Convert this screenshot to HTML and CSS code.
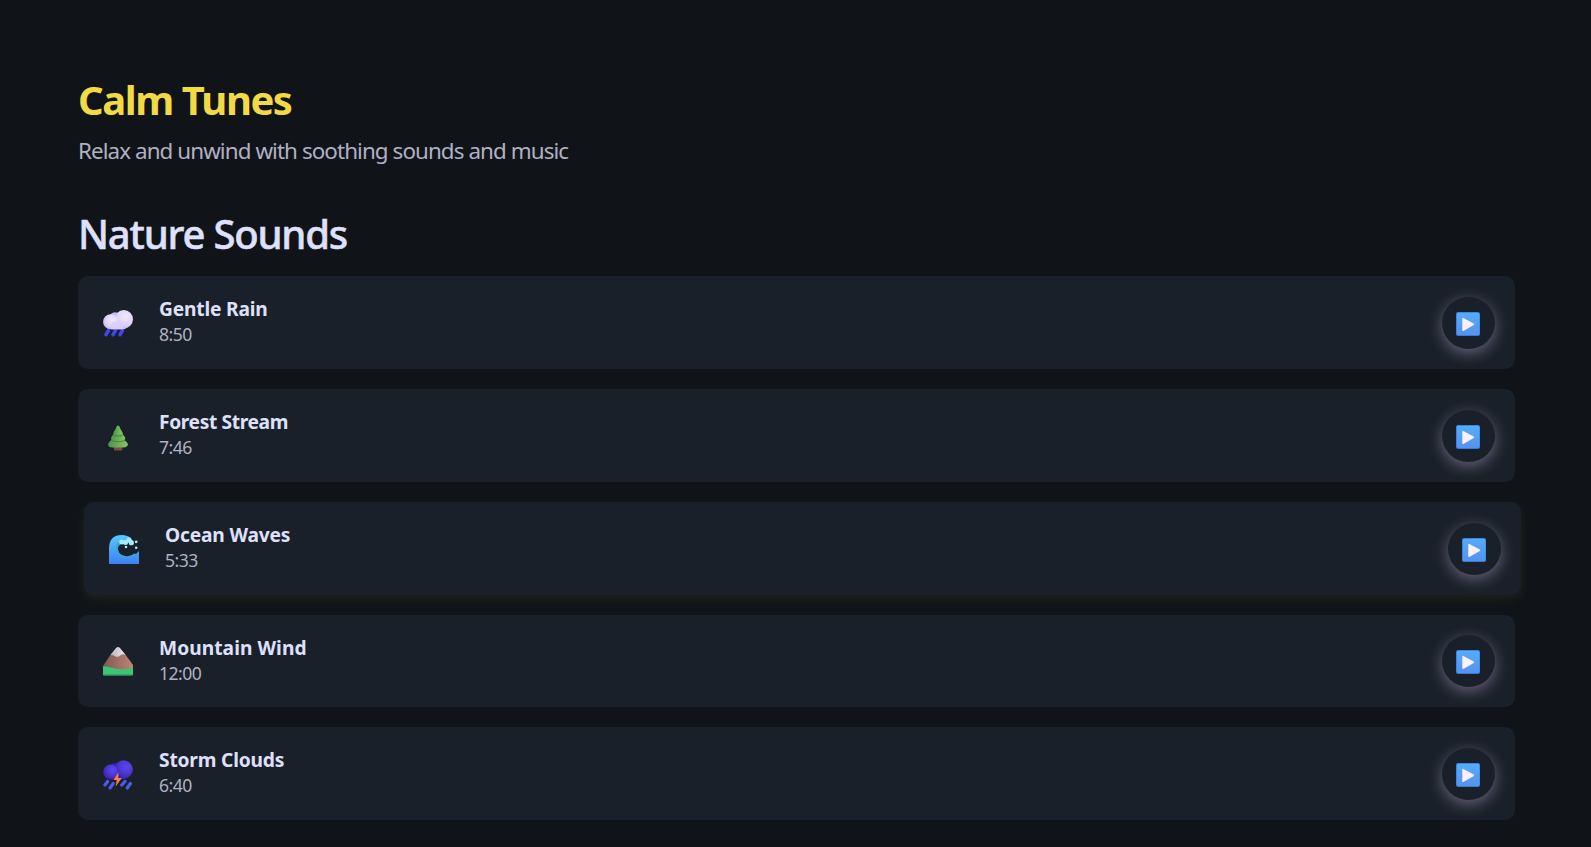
FILE: index.html
```html
<!DOCTYPE html>
<html lang="en">
<head>
<meta charset="utf-8">
<title>Calm Tunes</title>
<link rel="stylesheet" href="styles.css">
</head>
<body>
<svg class="defs" aria-hidden="true">
  <defs>
    <linearGradient id="play-bg" x1="0" y1="0" x2="0" y2="1"><stop offset="0" stop-color="#52adfb"/><stop offset="1" stop-color="#5493ee"/></linearGradient>
    <symbol id="play" viewBox="0 0 24 24">
      <rect width="24" height="24" rx="2" fill="#3c78d8"/>
      <rect x=".8" y=".8" width="22.7" height="22.2" rx="1.6" fill="url(#play-bg)"/>
      <path d="M6.300 6.600q0-1.200 1-.6l10.500 5.600q1 .7 0 1.400l-10.500 5.900q-1 .5-1-.6z" fill="#fdeffb"/>
    </symbol>
  </defs>
</svg>
<main class="page">
  <header>
    <h1 class="title">Calm Tunes</h1>
    <p class="subtitle">Relax and unwind with soothing sounds and music</p>
  </header>
  <section>
    <h2 class="section-title">Nature Sounds</h2>
    <ul class="tracks">
      <li class="track">
        <svg class="track-icon" viewBox="0 0 30 30">
          <defs><radialGradient id="rain-puff" cx=".6" cy=".35" r=".75"><stop offset="0" stop-color="#f3e9ff"/><stop offset=".6" stop-color="#ddd3fa"/><stop offset="1" stop-color="#b9b2e8"/></radialGradient></defs>
          <path d="M5.500 21.500l-2.500 4.200M12.500 21.500l-2.500 4.200M19.500 21.500l-2.500 4.200" stroke="#3f46f8" stroke-width="3.500" stroke-linecap="round"/>
          <circle cx="12" cy="9" r="5.800" fill="#c3bdf0"/>
          <rect x="5" y="11" width="19" height="9.300" rx="4" fill="#d3caf6"/>
          <circle cx="20.800" cy="10.200" r="9.200" fill="url(#rain-puff)"/>
          <circle cx="7.600" cy="12.800" r="7.500" fill="url(#rain-puff)"/>
          <path d="M9 13h11v7.300H8z" fill="#d9cff8"/>
        </svg>
        <div class="track-info"><h3 class="track-name">Gentle Rain</h3><p class="track-time">8:50</p></div>
        <button class="play" aria-label="Play"><svg class="play-icon"><use href="#play"/></svg></button>
      </li>
      <li class="track">
        <svg class="track-icon" viewBox="0 0 30 30">
          <defs><linearGradient id="leaf" x1="0" x2="1"><stop offset="0" stop-color="#4f944e"/><stop offset="1" stop-color="#84c95a"/></linearGradient></defs>
          <rect x="11" y="24" width="8.300" height="4.400" rx=".8" fill="#7b4b4b"/>
          <path d="M9.500 15.500h11q.5 2.500 3 4.500q2.300 2.300.8 4-1.300 1.500-4.500 1.500H9.800q-3.200 0-4.300-1.500-1.300-1.700.7-4 2.800-2 3.300-4.500z" fill="url(#leaf)"/>
          <path d="M9 19.500q6 1.600 12.500-.2l.5-.6-2-3H10l-2 3z" fill="#4a8742"/>
          <path d="M11 10h8q.3 2.500 2 4 2.200 2.200.8 3.500-1.500 1.500-6.800 1.500t-6.500-1.500q-1.300-1.300.7-3.500 1.800-2 1.800-4z" fill="url(#leaf)"/>
          <path d="M10.500 14q4 1.200 9 0l-1-2.500h-7z" fill="#4a8742"/>
          <path d="M13.500 4.500q1.500-2 3 0 .9 3 2.500 5 2.500 3.800-4 4-6.300-.2-4-4 1.700-2 2.500-5z" fill="url(#leaf)"/>
        </svg>
        <div class="track-info"><h3 class="track-name">Forest Stream</h3><p class="track-time">7:46</p></div>
        <button class="play" aria-label="Play"><svg class="play-icon"><use href="#play"/></svg></button>
      </li>
      <li class="track track-active">
        <svg class="track-icon" viewBox="0 0 30 30">
          <defs><linearGradient id="sea" x1="0" y1="0" x2="0" y2="1"><stop offset="0" stop-color="#55c8fd"/><stop offset="1" stop-color="#3f80f3"/></linearGradient></defs>
          <path d="M0 29V12Q1 0 12.500 0q6.500 0 10 3.500L24 8 15 8Q8.500 9 9 14.500T15 21.500q8 2.500 15-5.500v13z" fill="url(#sea)"/>
          <path d="M13 6.500Q7.500 8.500 8 14t5.500 7.200q7 2.800 13-2.200" fill="none" stroke="#35a5dd" stroke-width="2"/>
          <g fill="#a5ecfb"><circle cx="12.700" cy="7" r="2.500"/><circle cx="16.500" cy="7.500" r="2.500"/><circle cx="19.800" cy="4.700" r="2.300"/><circle cx="22.300" cy="7.700" r="2.600"/><circle cx="27.200" cy="6.800" r="1.400"/><circle cx="17" cy="12" r="1.300"/><circle cx="27.200" cy="12.800" r="1.300"/></g>
        </svg>
        <div class="track-info"><h3 class="track-name">Ocean Waves</h3><p class="track-time">5:33</p></div>
        <button class="play" aria-label="Play"><svg class="play-icon"><use href="#play"/></svg></button>
      </li>
      <li class="track">
        <svg class="track-icon" viewBox="0 0 30 30">
          <defs><linearGradient id="rock" x1="0" x2="1"><stop offset="0" stop-color="#80584f"/><stop offset="1" stop-color="#bd8678"/></linearGradient><linearGradient id="snow" x1="0" x2="1"><stop offset="0" stop-color="#b9b3bb"/><stop offset="1" stop-color="#eee9f1"/></linearGradient></defs>
          <path d="M0 19L8 7l14 0 8 11v6H0z" fill="url(#rock)"/>
          <path d="M7.500 7.700L13 1q2-2 4 0l5.500 6.700q-3-1.200-5 .5-2.500 2.300-5 1.200-2-1.500-5-1.700z" fill="url(#snow)"/>
          <path d="M0 19.500q5-.5 10 1.500t12 1q5-1 8-1.500v7q0 1-1 1H1q-1 0-1-1z" fill="#3dc576"/>
          <path d="M.5 28.100h29" stroke="#287f51" stroke-width=".9"/>
        </svg>
        <div class="track-info"><h3 class="track-name">Mountain Wind</h3><p class="track-time">12:00</p></div>
        <button class="play" aria-label="Play"><svg class="play-icon"><use href="#play"/></svg></button>
      </li>
      <li class="track">
        <svg class="track-icon" viewBox="0 0 30 30">
          <defs><radialGradient id="storm-puff" cx=".65" cy=".35" r=".75"><stop offset="0" stop-color="#5a46f2"/><stop offset=".5" stop-color="#4a38d5"/><stop offset="1" stop-color="#341ba0"/></radialGradient></defs>
          <path d="M4.600 21.500L2 25M10.200 23.500L7 28M22 21.500L18.800 25M27.400 23.500L24.300 28" stroke="#4c5af0" stroke-width="3.200" stroke-linecap="round"/>
          <circle cx="12" cy="9" r="5.900" fill="#3921a8"/>
          <rect x="5" y="11" width="19" height="8.200" rx="3" fill="#351ea2"/>
          <circle cx="20.500" cy="9.500" r="9.300" fill="url(#storm-puff)"/>
          <circle cx="7.500" cy="12" r="7.400" fill="url(#storm-puff)"/>
          <path d="M15.500 12L10.500 20h3.200l-1 6.500 6.100-8.500h-3.500z" fill="#ff7b48"/>
        </svg>
        <div class="track-info"><h3 class="track-name">Storm Clouds</h3><p class="track-time">6:40</p></div>
        <button class="play" aria-label="Play"><svg class="play-icon"><use href="#play"/></svg></button>
      </li>
    </ul>
  </section>
</main>
</body>
</html>
```

FILE: styles.css
```css
* { box-sizing: border-box; margin: 0; padding: 0; }
body { background: #101418; color: #dfe0fb; font-family: "Noto Sans", "Open Sans", sans-serif; min-height: 847px; overflow: hidden; }
.defs { position: absolute; width: 0; height: 0; }
.page { padding: 73px 76px 0 78px; }
.title { font-size: 40px; font-weight: 700; line-height: 54px; letter-spacing: -1.450px; color: #f2da45; }
.subtitle { margin-top: 9px; font-size: 22.400px; line-height: 30px; letter-spacing: -.92px; color: #b0b0c3; }
.section-title { margin-top: 41px; font-size: 40px; font-weight: 500; line-height: 54px; letter-spacing: -1.200px; -webkit-text-stroke: .5px currentColor; }
.tracks { list-style: none; margin-top: 15.200px; display: flex; flex-direction: column; gap: 20px; }
.track { display: flex; align-items: center; height: 92.800px; padding: 0 20px 0 25px; border-radius: 10px; background: #1a2029; }
.track-active { transform: translateX(6px); box-shadow: 0 4px 12px rgba(242, 218, 69, .07); }
.track-icon { width: 30px; height: 30px; flex: none; margin-top: 3px; }
.track-info { margin-left: 26px; flex: 1; padding-bottom: 2.800px; }
.track-name { font-size: 19.200px; font-weight: 700; line-height: 26px; letter-spacing: -.18px; }
.track:nth-child(2) .track-name { letter-spacing: -.37px; }
.track:nth-child(4) .track-name { letter-spacing: .05px; }
.track-time { font-size: 17.600px; line-height: 24px; letter-spacing: -.55px; color: #b0b0c3; }
.play { width: 53px; height: 52px; margin-top: 1px; padding: 2px 1px 0 0; border: 0; border-radius: 50%; background: #1a2029; display: grid; place-items: center; box-shadow: 0 4px 15px rgba(223, 200, 251, .4); }
.play-icon { width: 24px; height: 24px; display: block; }
```
